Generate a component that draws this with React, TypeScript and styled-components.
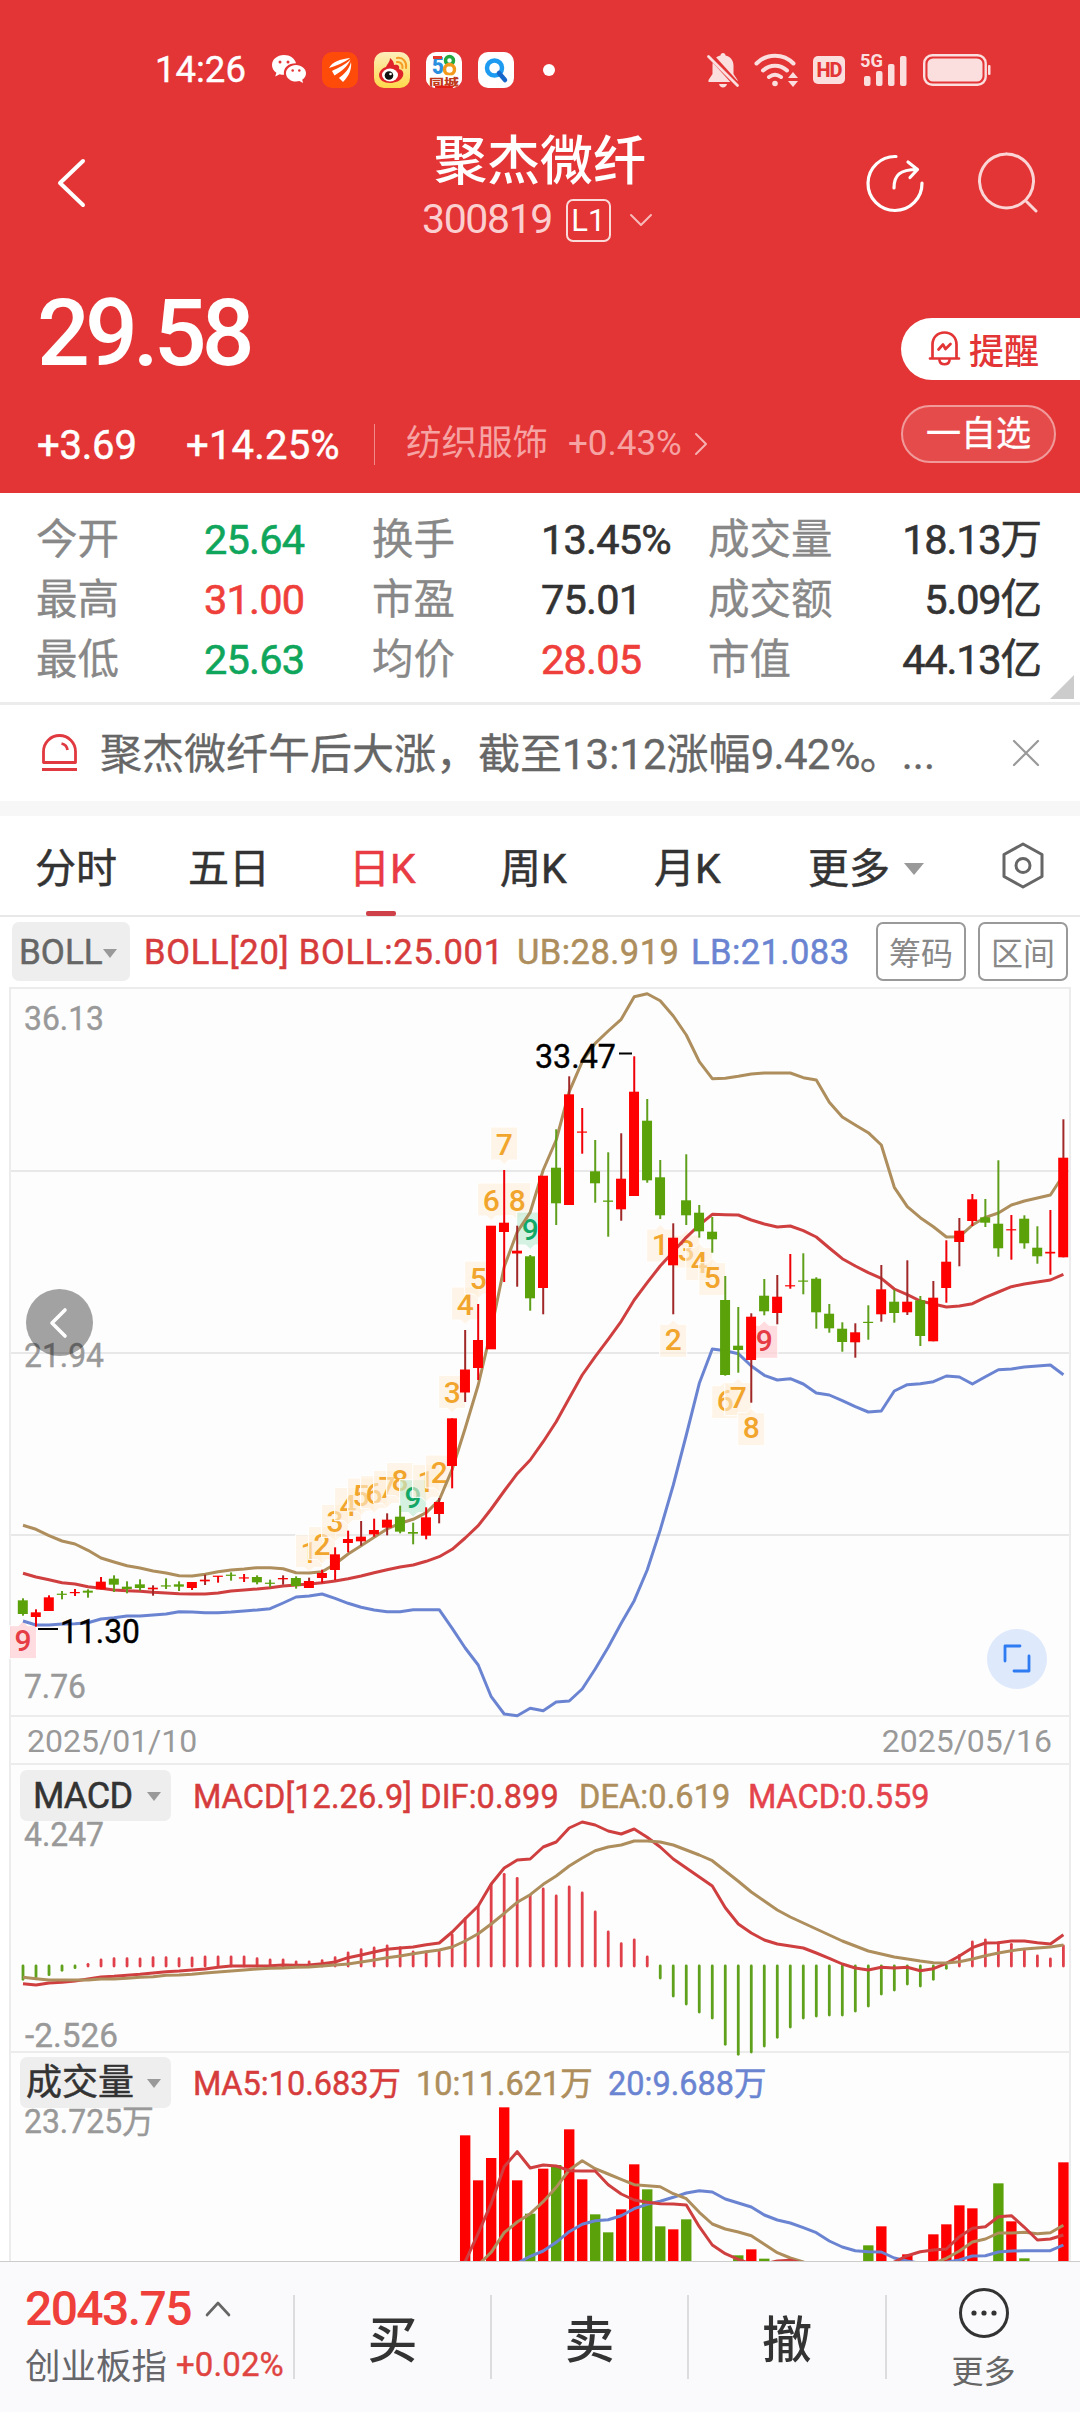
import React from 'react';
import styled, { createGlobalStyle, css } from 'styled-components';

const RED = '#e33536';
const UP = '#ff0000';
const DOWN = '#5aa10a';
const TAN = '#ad8e5c';
const BLUE = '#6a84d2';
const LINE_RED = '#cf3f3f';
const GRID = '#ececec';

const Global = createGlobalStyle`
  *, *::before, *::after { box-sizing: border-box; }
  body {
    margin: 0;
    background: #fdfdfd;
    font-family: Roboto, "Noto Sans CJK SC", sans-serif;
    color: #333;
    font-kerning: none;
  }
  svg { display: block; overflow: visible; flex: none; }
`;

const Screen = styled.div`
  width: 1080px;
  height: 2412px;
  display: flex;
  flex-direction: column;
  overflow: hidden;
  background: #fff;
`;

/* ---------- numbers ---------- */
const Num = styled.span<{ $size: number; $ls?: number; $color?: string; $weight?: number }>`
  font-size: ${p => p.$size}px;
  line-height: 1.2;
  letter-spacing: ${p => p.$ls ?? 0}px;
  color: ${p => p.$color ?? 'inherit'};
  font-weight: ${p => p.$weight ?? 400};
  white-space: pre;
`;

/* ---------- header ---------- */
const Header = styled.header`
  height: 493px;
  flex: none;
  background: ${RED};
  color: #fff;
  display: flex;
  flex-direction: column;
`;

const StatusBar = styled.div`
  height: 124px;
  padding: 16px 89px 0 155px;
  display: flex;
  align-items: center;
  justify-content: space-between;
`;

const StatusGroup = styled.div<{ $gap: number }>`
  display: flex;
  align-items: center;
  gap: ${p => p.$gap}px;
`;

const Clock = styled(Num)`
  width: 101px;
  -webkit-text-stroke: 0.4px currentColor;
`;

const AppBadge = styled.div<{ $bg: string }>`
  width: 36px;
  height: 36px;
  border-radius: 10px;
  background: ${p => p.$bg};
  display: flex;
  align-items: center;
  justify-content: center;
  overflow: hidden;
`;

const Dot = styled.i`
  width: 12px;
  height: 12px;
  border-radius: 50%;
  margin-left: 13px;
  background: #fff;
`;

const TitleBar = styled.div`
  height: 126px;
  padding: 0 42px 0 56px;
  display: grid;
  grid-template-columns: 190px 1fr 190px;
`;

const TitleSide = styled.div<{ $end?: boolean }>`
  display: flex;
  align-items: center;
  height: 118px;
  gap: 53px;
  justify-content: ${p => (p.$end ? 'flex-end' : 'flex-start')};
`;

const TitleCenter = styled.div`
  display: flex;
  flex-direction: column;
  align-items: center;
  padding-right: 14px;
`;

const StockName = styled.h1`
  margin: 0;
  padding-top: 6px;
  height: 72px;
  font-size: 53px;
  line-height: 64px;
  font-weight: 500;
`;

const CodeRow = styled.div`
  height: 48px;
  display: flex;
  align-items: center;
  padding-right: 5px;
  color: #fbcfcf;
`;

const LevelTag = styled.span`
  width: 45px;
  height: 43px;
  margin: 0 18px 0 14px;
  border: 2px solid #fbdada;
  border-radius: 7px;
  display: flex;
  align-items: center;
  justify-content: center;
  font-size: 31px;
  line-height: 1;
  color: #fff;
`;

const Quote = styled.div`
  flex: 1;
  display: flex;
  justify-content: space-between;
`;

const QuoteLeft = styled.div`
  padding: 34px 0 0 37px;
`;

const Price = styled.div`
  height: 100px;
  display: flex;
  align-items: center;
`;

const ChangeRow = styled.div`
  height: 60px;
  margin-top: 30px;
  display: flex;
  align-items: center;
`;

const ChangeValue = styled(Num)<{ $w: number }>`
  width: ${p => p.$w}px;
  padding-top: 3px;
  -webkit-text-stroke: 0.5px currentColor;
`;

const Rule = styled.i`
  width: 1px;
  height: 41px;
  background: #f08a8a;
  margin-right: 31px;
`;

const Sector = styled.span`
  font-size: 35.5px;
  line-height: 50px;
  color: #f6a3a3;
  width: 162px;
  padding-bottom: 2px;
`;

const QuoteRight = styled.div`
  width: 179px;
  padding-top: 68px;
  display: flex;
  flex-direction: column;
  gap: 25px;
`;

const AlertButton = styled.button`
  height: 62px;
  border: 0;
  padding: 0 0 2px 27px;
  border-radius: 31px 0 0 31px;
  background: #fff;
  display: flex;
  align-items: center;
  gap: 8px;
  font: 500 35px Roboto, "Noto Sans CJK SC", sans-serif;
  color: ${RED};
`;

const WatchButton = styled.button`
  width: 155px;
  height: 58px;
  border: 2px solid #f09a9a;
  border-radius: 29px;
  background: #e64b4c;
  padding: 2px 0 0;
  font: 400 35px/50px Roboto, "Noto Sans CJK SC", sans-serif;
  color: #fff;
  white-space: nowrap;
  -webkit-text-stroke: 0.4px currentColor;
`;

/* ---------- key figures ---------- */
const Stats = styled.section`
  position: relative;
  height: 212px;
  flex: none;
  padding: 17px 38px 0 36px;
  border-bottom: 3px solid ${GRID};
  display: grid;
  grid-template-columns: 168px 168px 169px 167px 140px 1fr;
  grid-auto-rows: 60px;
  align-items: center;
`;

const StatLabel = styled.span`
  font-size: 41.5px;
  line-height: 60px;
  color: #888;
  white-space: nowrap;
  -webkit-text-stroke: 0.3px currentColor;
`;

const StatValue = styled.span<{ $color?: string; $end?: boolean }>`
  font-size: 41.5px;
  line-height: 60px;
  letter-spacing: ${p => (p.$end ? -1.2 : -0.8)}px;
  color: ${p => p.$color ?? '#333'};
  text-align: ${p => (p.$end ? 'right' : 'left')};
  white-space: nowrap;
  -webkit-text-stroke: 0.6px currentColor;
`;

const Unit = styled.span`
  letter-spacing: 0;
`;

const Corner = styled.i`
  position: absolute;
  right: 6px;
  bottom: 3px;
  border-left: 24px solid transparent;
  border-bottom: 24px solid #ccc;
`;

/* ---------- notice ---------- */
const Notice = styled.section`
  height: 96px;
  flex: none;
  padding: 0 40px 0 41px;
  display: flex;
  align-items: center;
`;

const NoticeText = styled.p`
  flex: 1;
  margin: 0 0 0 22px;
  padding-top: 3px;
  font-size: 42px;
  line-height: 60px;
  color: #666;
  white-space: nowrap;
  -webkit-text-stroke: 0.3px currentColor;
`;

const Tight = styled.span<{ $ls: number }>`
  letter-spacing: ${p => p.$ls}px;
`;

const Band = styled.div`
  height: 15px;
  flex: none;
  background: #f7f7f7;
`;

/* ---------- period tabs ---------- */
const Tabs = styled.nav`
  height: 101px;
  flex: none;
  padding: 0 35px 0 35px;
  border-bottom: 2px solid #e8e8e8;
  display: flex;
`;

const Tab = styled.div<{ $w: number; $active?: boolean }>`
  width: ${p => p.$w}px;
  height: 100px;
  flex: none;
  display: flex;
  flex-direction: column;
  justify-content: space-between;
  padding-top: 23px;
  font-size: 41px;
  line-height: 60px;
  white-space: nowrap;
  color: ${p => (p.$active ? '#e93b44' : '#333')};
  -webkit-text-stroke: 0.5px currentColor;
`;

const TabLabel = styled.span`
  display: flex;
  align-items: center;
  gap: 14px;
`;

const Underline = styled.i`
  width: 30px;
  height: 5px;
  margin-left: 17px;
  border-radius: 2px;
  background: #cf4148;
`;

const TabSettings = styled.div`
  margin-left: auto;
  padding-top: 26px;
`;

/* ---------- indicator bars ---------- */
const Caret = styled.i<{ $s: number; $color?: string }>`
  border: ${p => p.$s}px solid transparent;
  border-top: ${p => p.$s + 2}px solid ${p => p.$color ?? '#999'};
  border-bottom: 0;
`;

const BollBar = styled.div`
  height: 70px;
  flex: none;
  padding: 5px 12px 6px;
  display: flex;
  align-items: center;
`;

const picker = css`
  background: #eee;
  border-radius: 7px;
  display: flex;
  align-items: center;
  white-space: nowrap;
`;

const BollPicker = styled.div`
  ${picker}
  width: 118px;
  height: 59px;
  padding: 3px 0 0 7px;
  margin-right: 14px;
  color: #666;
  -webkit-text-stroke: 0.5px currentColor;
`;

const Legend = styled(Num)<{ $w: number }>`
  width: ${p => p.$w}px;
  flex: none;
  padding-top: 3px;
  -webkit-text-stroke: 0.5px currentColor;
`;

const OutlineButton = styled.button`
  width: 90px;
  height: 59px;
  flex: none;
  padding: 0 0 2px;
  border: 2px solid #999;
  border-radius: 7px;
  background: #fff;
  font: 400 32px Roboto, "Noto Sans CJK SC", sans-serif;
  color: #888;
`;

const BollActions = styled.div`
  margin-left: auto;
  display: flex;
  gap: 12px;
`;

/* ---------- charts ---------- */
const Frame = styled.section`
  flex: 1;
  min-height: 0;
  margin: 0 9px;
  border: 2px solid ${GRID};
  border-bottom: 0;
  background: #fdfdfd;
  display: flex;
  flex-direction: column;
`;

const PricePane = styled.div`
  position: relative;
  height: 728px;
  flex: none;
  border-bottom: 2px solid ${GRID};
`;

const PanHandle = styled.button`
  position: absolute;
  left: 15px;
  top: 300px;
  width: 67px;
  height: 67px;
  border: 0;
  padding: 0 3px 0 0;
  border-radius: 50%;
  background: rgba(0, 0, 0, 0.36);
  display: flex;
  align-items: center;
  justify-content: center;
`;

const ExpandButton = styled.button`
  position: absolute;
  right: 22px;
  top: 640px;
  width: 60px;
  height: 60px;
  border: 0;
  padding: 0;
  border-radius: 50%;
  background: #dee9fc;
  display: flex;
  align-items: center;
  justify-content: center;
`;

const DateRow = styled.div`
  height: 48px;
  flex: none;
  padding: 2px 17px 0 16px;
  border-bottom: 2px solid ${GRID};
  display: flex;
  align-items: center;
  justify-content: space-between;
  color: #999;
`;

const MacdPane = styled.div`
  height: 288px;
  flex: none;
  border-bottom: 2px solid ${GRID};
`;

const VolumePane = styled.div`
  height: 208px;
  flex: none;
  overflow: hidden;
`;

const PaneBar = styled.div<{ $top: number }>`
  height: ${p => 51 + p.$top}px;
  padding: ${p => p.$top}px 0 0 9px;
  display: flex;
  align-items: center;
`;

const PanePicker = styled.div<{ $pad: number }>`
  ${picker}
  width: 151px;
  height: 51px;
  padding: 2px 10px 0 ${p => p.$pad}px;
  margin-right: 22px;
  justify-content: space-between;
  color: #333;
  -webkit-text-stroke: 0.5px currentColor;
`;

/* ---------- trade bar ---------- */
const TradeBar = styled.footer`
  height: 151px;
  flex: none;
  border-top: 1px solid #ccc;
  background: #fafafc;
  display: grid;
  grid-template-columns: 293px 197px 197px 198px 1fr;
`;

const IndexCell = styled.div`
  padding: 18px 0 0 25px;
  display: flex;
  flex-direction: column;
`;

const IndexTop = styled.div`
  height: 58px;
  display: flex;
  align-items: center;
  gap: 14px;
`;

const IndexBottom = styled.div`
  height: 54px;
  margin-top: -2px;
  display: flex;
  align-items: center;
  gap: 9px;
  font-size: 35.5px;
  color: #66666b;
  white-space: nowrap;
`;

const IndexChange = styled(Num)`
  padding-top: 3px;
  -webkit-text-stroke: 0.4px currentColor;
`;

const TradeCell = styled.div`
  height: 84px;
  margin-top: 33px;
  border-left: 2px solid #dcdcde;
  display: flex;
  flex-direction: column;
  align-items: center;
  justify-content: center;
  padding-top: 8px;
  font-size: 50px;
  line-height: 70px;
  font-weight: 500;
`;

const MoreCell = styled(TradeCell)`
  padding-top: 7px;
  gap: 11px;
  font-size: 32px;
  line-height: 44px;
  font-weight: 400;
  color: #666;
`;

/* ---------- chart data (y values on the canvas grid) ---------- */
type Kind = 'r' | 'd' | 'g';
type Candle = [Kind, number, number, number, number];

const low = (k: Kind, h: number, l: number, t: number, b: number): Candle =>
  [k, 1380 + h / 3, 1380 + l / 3, 1380 + t / 3, 1380 + b / 3];

const candles: Candle[] = [
  low('g', 655, 707, 661, 702), low('r', 688, 740, 697, 711), low('r', 646, 692, 652, 693),
  low('g', 633, 658, 641, 644), low('r', 627, 648, 636, 639), low('g', 628, 653, 632, 638),
  low('r', 591, 628, 605, 628), low('g', 586, 636, 596, 614), low('g', 604, 640, 620, 627),
  low('g', 598, 632, 613, 624), low('d', 616, 647, 623, 628), low('g', 595, 627, 616, 619),
  low('g', 604, 633, 613, 620), low('r', 606, 630, 606, 624), low('d', 584, 615, 599, 604),
  low('r', 588, 608, 587, 590), low('g', 577, 602, 584, 587), low('r', 582, 606, 592, 595),
  low('g', 586, 613, 591, 607), low('g', 599, 622, 608, 611), low('d', 586, 614, 594, 598),
  low('g', 589, 626, 594, 618), low('d', 593, 624, 603, 624), low('r', 569, 608, 579, 594),
  low('r', 502, 600, 523, 570), low('r', 452, 517, 477, 489), low('d', 423, 497, 470, 484),
  low('r', 416, 470, 450, 463), low('d', 400, 466, 419, 443), low('g', 377, 460, 410, 455),
  low('g', 428, 493, 456, 461), low('r', 382, 478, 412, 467), low('d', 354, 430, 366, 402),
  low('r', 115, 325, 115, 258),
  ['d', 1330, 1402, 1369.5, 1392.5], ['r', 1304, 1380, 1340, 1368], ['r', 1226, 1349, 1225.7, 1349.3],
  ['r', 1170, 1282, 1222.7, 1232], ['d', 1225.7, 1286.7, 1250.7, 1253.5], ['g', 1255, 1310.7, 1256.3, 1298.3],
  ['d', 1176, 1314.3, 1175.7, 1288], ['g', 1129.3, 1225, 1167.7, 1203.3], ['d', 1076.3, 1205, 1094.3, 1205],
  ['r', 1108, 1153.7, 1131.5, 1132.7], ['g', 1140, 1202.7, 1171.3, 1183.3], ['g', 1152.3, 1236.7, 1200.5, 1201.8],
  ['d', 1133.3, 1220.7, 1178.7, 1209.3], ['r', 1056.3, 1196, 1091.7, 1196], ['g', 1099, 1182.7, 1120.7, 1180.3],
  ['g', 1160, 1219, 1177.3, 1215.3], ['d', 1223.3, 1314.3, 1237.7, 1265.3], ['g', 1154.3, 1225, 1200.3, 1215.3],
  ['g', 1205, 1237.7, 1212.7, 1231.3], ['g', 1217, 1252.7, 1231.7, 1239.3], ['g', 1276, 1375.7, 1300, 1375],
  ['g', 1307, 1372.7, 1345.7, 1350], ['d', 1313.3, 1402.7, 1316.7, 1360], ['g', 1279, 1315.3, 1295.7, 1311.3],
  ['d', 1275, 1324.3, 1296.7, 1313], ['r', 1254, 1288.7, 1285.2, 1286.4], ['g', 1253.3, 1294.3, 1280.5, 1281.7],
  ['g', 1277.3, 1328.7, 1278.7, 1312.3], ['g', 1304, 1332.7, 1313.7, 1328.3], ['g', 1322.3, 1351.7, 1328.7, 1342],
  ['d', 1323.3, 1357.7, 1332.3, 1342.3], ['g', 1305.3, 1339.7, 1321.8, 1323], ['d', 1265, 1321.7, 1289.3, 1314.3],
  ['g', 1289.7, 1322.7, 1301.7, 1313], ['d', 1260.3, 1315, 1301.7, 1312.3], ['g', 1296, 1346, 1300.3, 1336],
  ['d', 1281, 1341.3, 1297.7, 1341.3], ['r', 1240.3, 1302.7, 1261.7, 1288], ['d', 1218, 1266.3, 1230.7, 1242],
  ['r', 1194, 1226, 1199.3, 1221], ['g', 1199, 1227, 1217.3, 1222.7], ['g', 1160.3, 1256.7, 1223.7, 1248.3],
  ['r', 1215, 1259.7, 1229.2, 1230.4], ['g', 1215.3, 1248.7, 1218.7, 1243.3], ['g', 1226.3, 1263.7, 1247.7, 1256.3],
  ['r', 1210, 1274.7, 1251.8, 1253.5], ['d', 1119.3, 1257.3, 1157.7, 1257.3],
];

const third = (base: number, ys: number[]) => ys.map(y => base + y / 3);

const upper = [
  ...third(1380, [436, 448, 467, 483, 492, 511, 534, 546, 557, 564, 573, 579, 587, 588, 583, 575, 570, 567, 563, 563, 566, 578, 579, 575, 552, 522, 497, 472, 447, 430, 418, 398, 360, 268, 145]),
  1385, 1330, 1266.7, 1232, 1212.3, 1170, 1140, 1091.7, 1061.7, 1043.3, 1031, 1019.3, 996.7, 993.7, 1000.7, 1016, 1035, 1061.7,
  1078.7, 1078.3, 1076.3, 1074, 1073, 1073, 1073, 1077.7, 1080, 1102.3, 1117, 1125, 1132.7, 1145, 1187.3, 1206.7, 1217.7, 1226.7,
  1237, 1236.7, 1225, 1217.3, 1213, 1205, 1201, 1198, 1195, 1175,
];
const middle = [
  ...third(1380, [580, 591, 599, 608, 612, 620, 625, 630, 632, 634, 637, 639, 641, 642, 642, 639, 633, 630, 627, 623, 618, 615, 612, 608, 603, 596, 588, 578, 569, 561, 555, 544, 530, 508, 474, 437, 387, 333, 281, 240]),
  1441.7, 1421.7, 1398.3, 1375, 1356.7, 1339.3, 1321.3, 1300, 1282.7, 1266, 1251.7, 1237.3, 1225, 1214.3, 1214.7, 1215, 1220,
  1224, 1227, 1226, 1230.7, 1237, 1248, 1258.7, 1266, 1272.7, 1278.3, 1289, 1294.7, 1301, 1304, 1307, 1306, 1303.7, 1297.3, 1292,
  1286.7, 1284, 1282, 1280, 1274.3,
];
const lower = [
  ...third(1380, [723, 735, 735, 732, 731, 728, 717, 713, 708, 708, 705, 702, 695, 696, 698, 698, 696, 693, 690, 686, 669, 651, 648, 642, 655, 670, 682, 690, 695, 695, 689, 689, 689, 745, 804, 855, 950, 1002, 1007, 985, 992, 966, 963, 927, 867, 802, 730, 662, 570, 450, 315, 165, 10]),
  1349, 1350.7, 1353.7, 1366, 1375.3, 1380, 1378.7, 1384, 1393, 1395, 1400.7, 1406.7, 1412, 1411, 1391, 1384.7, 1383.7, 1381.7,
  1376, 1377, 1384, 1376.7, 1369.7, 1369, 1367, 1366, 1365, 1374.7,
];

const macdBars = third(1760, [
  655, 648, 641, 628, 620, 610, 597, 593, 593, 594, 590, 590, 593, 591, 588, 588, 588, 588, 593, 597, 597, 603, 603, 599, 590, 576, 566,
  561, 555, 560, 573, 573, 570, 522, 473, 437, 370, 340, 352, 403, 384, 405, 378, 396, 453, 513, 548, 537, 588, 651, 705, 729, 753, 771,
  850, 880, 873, 855, 829, 798, 771, 765, 762, 762, 750, 735, 699, 687, 669, 675, 655, 622, 583, 543, 537, 545, 550, 565, 585, 594, 555,
]);
const dif = third(1760, [
  668, 672, 666, 664, 660, 654, 648, 646, 643, 640, 636, 632, 630, 627, 624, 619, 615, 615, 615, 614, 612, 613, 612, 608, 603, 590, 582,
  573, 565, 561, 558, 551, 546, 513, 473, 435, 369, 321, 297, 294, 258, 243, 201, 183, 192, 210, 219, 204, 229, 258, 294, 321, 348, 375,
  440, 489, 516, 537, 549, 555, 561, 576, 592, 609, 621, 627, 619, 621, 619, 629, 623, 607, 585, 560, 546, 545, 540, 540, 545, 549, 521,
]);
const dea = third(1760, [
  649, 653, 657, 657, 657, 657, 654, 654, 652, 649, 647, 643, 642, 640, 636, 633, 630, 627, 624, 622, 621, 619, 618, 615, 612, 609, 603,
  597, 590, 585, 578, 572, 567, 558, 540, 518, 489, 457, 424, 401, 370, 345, 315, 291, 269, 258, 252, 240, 240, 243, 252, 267, 282, 299,
  330, 361, 393, 420, 447, 468, 486, 504, 522, 540, 555, 570, 579, 588, 594, 600, 605, 606, 602, 594, 584, 576, 569, 564, 561, 558, 552,
]);

const volumes: [number, Kind, number][] = [
  [34, 'r', 256], [35, 'r', 391], [36, 'r', 324], [37, 'r', 172], [38, 'r', 391], [39, 'g', 491], [40, 'r', 356], [41, 'g', 345],
  [42, 'r', 238], [43, 'r', 388], [44, 'g', 493], [45, 'g', 547], [46, 'r', 478], [47, 'r', 343], [48, 'g', 418], [49, 'g', 529],
  [50, 'r', 538], [51, 'g', 508], [55, 'g', 616], [56, 'r', 598], [57, 'g', 626], [65, 'g', 586], [66, 'r', 529], [68, 'r', 613],
  [70, 'r', 553], [71, 'r', 523], [72, 'r', 466], [73, 'r', 475], [75, 'g', 400], [76, 'r', 514], [77, 'g', 625], [80, 'r', 337],
];
const ma5 = third(2050, [
  635, 550, 460, 350, 305, 354, 345, 348, 362, 363, 363, 404, 432, 450, 457, 461, 462, 465, 530, 585, 611, 628, 642, 642, 633, 631, 640,
  650, 650, 650, 650, 650, 650, 636, 617, 605, 600, 597, 560, 535, 530, 500, 497, 532, 570, 567, 555,
]);
const ma10 = third(2050, [
  645, 607, 548, 516, 491, 455, 412, 360, 332, 356, 372, 388, 404, 407, 410, 431, 446, 487, 522, 537, 546, 557, 583, 608, 624, 636,
  650, 650, 650, 650, 650, 650, 650, 650, 650, 640, 625, 603, 576, 567, 549, 549, 547, 551, 548, 526,
]);
const ma20 = third(2050, [
  640, 619, 603, 577, 545, 523, 512, 509, 497, 476, 463, 454, 442, 429, 422, 426, 447, 459, 471, 495, 510, 519, 533, 548, 573, 591, 602,
  605, 606, 624, 633, 640, 641, 637, 630, 618, 617, 606, 603, 602, 602, 602, 585,
]);

const px = (i: number) => 23 + i * 13.005;
const points = (ys: number[], from = 0) => ys.map((y, i) => `${px(i + from).toFixed(1)},${y.toFixed(1)}`).join(' ');

const Line = ({ ys, from, color }: { ys: number[]; from?: number; color: string }) => (
  <polyline points={points(ys, from)} fill="none" stroke={color} strokeWidth="3" strokeLinejoin="round" />
);

const tones = {
  o: { fill: 'rgba(255,238,216,0.6)', text: '#f1a52c' },
  g: { fill: 'rgba(190,235,212,0.65)', text: '#14a866' },
  p: { fill: 'rgba(253,208,212,0.75)', text: '#e63c46' },
};
type Mark = [number, string, 'up' | 'down', keyof typeof tones];
const marks: Mark[] = [
  [22, '1', 'up', 'o'], [23, '2', 'up', 'o'], [24, '3', 'up', 'o'], [25, '4', 'up', 'o'], [26, '5', 'up', 'o'], [27, '6', 'up', 'o'],
  [28, '7', 'up', 'o'], [29, '8', 'up', 'o'], [30, '9', 'up', 'g'], [31, '1', 'up', 'o'], [32, '2', 'up', 'o'], [33, '3', 'up', 'o'],
  [34, '4', 'up', 'o'], [35, '5', 'up', 'o'], [36, '6', 'up', 'o'], [37, '7', 'up', 'o'], [38, '8', 'up', 'o'], [39, '9', 'up', 'g'],
  [49, '1', 'down', 'o'], [50, '2', 'down', 'o'], [51, '3', 'down', 'o'], [52, '4', 'down', 'o'], [53, '5', 'down', 'o'],
  [54, '6', 'down', 'o'], [55, '7', 'down', 'o'], [56, '8', 'down', 'o'], [57, '9', 'down', 'p'], [0, '9', 'down', 'p'],
];

const SequenceMark = ({ mark: [i, digit, dir, tone] }: { mark: Mark }) => {
  const x = px(i);
  const top = dir === 'up' ? candles[i][1] - 43 : candles[i][2] + 10;
  const d = dir === 'up'
    ? `M${x - 13.5} ${top}h27v33h-9l-4.500 4.500l-4.500 -4.500h-9z`
    : `M${x - 13.5} ${top}h9l4.500 -4.500l4.500 4.500h9v33h-27z`;
  return (
    <g>
      <path d={d} fill={tones[tone].fill} stroke="#fff" strokeWidth="1" />
      <text x={x} y={top + (dir === 'up' ? 28 : 25.5)} textAnchor="middle" fontSize="30" fontWeight="500" fill={tones[tone].text}>{digit}</text>
    </g>
  );
};

const AxisLabel = ({ x, y, w, color = '#999', size = 32.5, children }: { x: number; y: number; w: number; color?: string; size?: number; children: string }) => (
  <text x={x} y={y} textLength={w} lengthAdjust="spacingAndGlyphs" fontSize={size} fill={color} stroke={color} strokeWidth="0.4">{children}</text>
);

const PriceChart = () => (
  <svg width="1058" height="726" viewBox="11 989 1058 726">
    {[1171, 1353, 1535].map(y => <path key={y} d={`M11 ${y}H1069`} stroke="#e8e8e8" strokeWidth="2" />)}
    {marks.map((m, k) => <SequenceMark key={k} mark={m} />)}
    <Line ys={upper} color={TAN} />
    <Line ys={middle} color={LINE_RED} />
    <Line ys={lower} color={BLUE} />
    {candles.map(([kind, h, l, t, b], i) => {
      const body = kind === 'g' ? DOWN : UP;
      const wick = kind === 'g' ? '#5f9f1c' : kind === 'd' ? '#a02828' : '#f00008';
      const x = px(i);
      return (
        <g key={i}>
          <rect x={x - 1} y={h} width="2" height={l - h} fill={wick} />
          <rect x={x - 5.2} y={t} width="10" height={Math.max(b - t, 1.2)} fill={body} />
        </g>
      );
    })}
    <AxisLabel x={24} y={1030} w={80}>36.13</AxisLabel>
    <AxisLabel x={24} y={1367} w={80}>21.94</AxisLabel>
    <AxisLabel x={24} y={1698} w={62}>7.76</AxisLabel>
    <AxisLabel x={535} y={1068} w={81} color="#000" size={33}>33.47</AxisLabel>
    <path d="M619 1053.500h13M38 1629h20" stroke="#000" strokeWidth="2" />
    <AxisLabel x={60} y={1643} w={80} color="#000" size={33}>11.30</AxisLabel>
  </svg>
);

const MacdChart = () => (
  <svg width="1058" height="230" viewBox="11 1820 1058 230">
    {macdBars.map((y, i) => {
      const up = y < 1964.5;
      return (
        <path key={i} d={`M${px(i)} 1965V${y}`} stroke={up ? '#e0404a' : '#5fa11c'} strokeWidth="2.8" strokeLinecap="round" />
      );
    })}
    <Line ys={dif} color={LINE_RED} />
    <Line ys={dea} color={TAN} />
    <AxisLabel x={24} y={1845} w={80}>4.247</AxisLabel>
    <AxisLabel x={25} y={2046} w={93}>-2.526</AxisLabel>
  </svg>
);

const VolumeChart = () => (
  <svg width="1058" height="153" viewBox="11 2108 1058 153">
    {volumes.map(([i, kind, y]) => (
      <rect key={i} x={px(i) - 5.2} y={2050 + y / 3} width="10.400" height={220 - y / 3} fill={kind === 'g' ? DOWN : UP} />
    ))}
    <Line ys={ma20} from={38} color={BLUE} />
    <Line ys={ma10} from={35} color={TAN} />
    <Line ys={ma5} from={34} color={LINE_RED} />
    <AxisLabel x={24} y={2133} w={130}>23.725万</AxisLabel>
  </svg>
);

/* ---------- icons ---------- */
const WechatIcon = () => (
  <svg width="34" height="30" viewBox="0 0 34 30">
    <path d="M12 0C5.200 0 0 4.400 0 10c0 3.200 1.700 5.900 4.400 7.800L3.200 21.500l4.500-2.300c1.300.4 2.800.6 4.300.6C11 13 16 8.300 24 8.300 22.800 3.500 18 0 12 0z" fill="#fff" />
    <path d="M34 18.200c0-4.600-4.500-8.300-10-8.300s-10 3.700-10 8.300 4.500 8.300 10 8.300c1.200 0 2.300-.2 3.400-.5l3.700 2-.9-3.300c2.300-1.500 3.800-3.900 3.800-6.500z" fill="#fff" />
    <circle cx="8" cy="7" r="1.500" fill={RED} /><circle cx="16" cy="7" r="1.500" fill={RED} />
    <circle cx="20.700" cy="15.500" r="1.300" fill={RED} /><circle cx="27.300" cy="15.500" r="1.300" fill={RED} />
  </svg>
);
const WingIcon = () => (
  <svg width="24" height="26" viewBox="0 0 24 26" fill="#fff">
    <path d="M22 1C12 2 4 5 1 11c7-2 14-5 20-9z" />
    <path d="M22.500 2.500C17 8 10 11 4 14l2.500 4.500C14 14 20 9 22.500 2.500z" />
    <path d="M23 5c-2 8-7 12-12 16l4 4C21 19 24 12 23 5z" />
  </svg>
);
const WeiboIcon = () => (
  <svg width="34" height="34" viewBox="0 0 34 34">
    <path d="M11 14c1-3 4-5 4-9 3 2 4 5 4 7 4-1 6 1 5 4 4 1 5 4 4 7-2 5-8 7-13 7-6 0-11-3-11-8 0-3 3-7 7-8z" fill="#e0232b" />
    <ellipse cx="15" cy="22" rx="8" ry="6.500" fill="#fff" />
    <circle cx="14" cy="22.500" r="4.300" fill="#111" /><circle cx="15.500" cy="21" r="1.300" fill="#fff" />
    <path d="M22 9c3-.5 6 2 5.500 6M22 5c6-1 10 4 9 10" fill="none" stroke="#f59a23" strokeWidth="2" strokeLinecap="round" />
  </svg>
);
const FiveEightIcon = () => (
  <svg width="36" height="36" viewBox="0 0 36 36" fontWeight="900">
    <text x="6" y="22" fontSize="24" fill="#2b8fe0" textLength="12" lengthAdjust="spacingAndGlyphs">5</text>
    <circle cx="23.500" cy="8.500" r="4" fill="none" stroke="#22a83f" strokeWidth="3.500" />
    <circle cx="23.500" cy="17.500" r="5" fill="none" stroke="#f39a1d" strokeWidth="3.500" />
    <path d="M7 4h9v3H7z" fill="#e33a2c" />
    <path d="M0 25q18-4 36 0v11H0z" fill="#fff" />
    <text x="3" y="33.500" fontSize="10" fill="#c0391b" textLength="30" lengthAdjust="spacingAndGlyphs">同城</text>
    <path d="M9 35h18" stroke="#e01c12" strokeWidth="3" />
  </svg>
);
const QIcon = () => (
  <svg width="26" height="26" viewBox="0 0 26 26" fill="none" strokeLinecap="round">
    <circle cx="11.500" cy="11" r="7.500" stroke="#1d9bf0" strokeWidth="4.500" />
    <path d="M16 16l6 7" stroke="#1766c9" strokeWidth="4.500" />
  </svg>
);
const soft = '#fbdede';
const MuteIcon = () => (
  <svg width="32" height="36" viewBox="0 0 32 36">
    <path d="M16 1c1.500 0 2.500 1 2.500 2.500 5 1 8 5 8 10V22l4 6v2h-29v-2l4-6v-8.500c0-5 3-9 8-10C13.500 2 14.500 1 16 1zM12 32h8c-.5 2-2 3.500-4 3.500S12.500 34 12 32z" fill={soft} />
    <path d="M2 2l29 32" stroke={RED} strokeWidth="6" /><path d="M1.500 4.500l29 29" stroke={soft} strokeWidth="2.800" strokeLinecap="round" />
  </svg>
);
const WifiIcon = () => (
  <svg width="44" height="34" viewBox="0 0 44 34" fill="none" stroke={soft} strokeWidth="4" strokeLinecap="round">
    <path d="M2.500 10.500c10-10.500 27-10.500 37 0M9 17.500c7-6.500 17-6.500 24 0M15 24c4-3 8-3 12 0" />
    <circle cx="21" cy="30.500" r="2.800" fill={soft} stroke="none" />
    <path d="M34 25l5-6 5 6zM34 28l5 6 5-6z" fill={soft} stroke="none" />
  </svg>
);
const HdTag = styled.span`
  width: 32px;
  height: 28px;
  border-radius: 5px;
  background: ${soft};
  color: ${RED};
  font-size: 20px;
  line-height: 28px;
  font-weight: 800;
  text-align: center;
  letter-spacing: -1px;
`;
const SignalIcon = () => (
  <svg width="48" height="34" viewBox="0 0 48 34" fill={soft}>
    <text x="0" y="14" fontSize="19" fontWeight="700" textLength="23" lengthAdjust="spacingAndGlyphs">5G</text>
    <rect x="4" y="23" width="6.500" height="10" rx="2" /><rect x="16" y="18" width="6.500" height="15" rx="2" />
    <rect x="28" y="11" width="6.500" height="22" rx="2" /><rect x="40" y="3" width="6.500" height="30" rx="2" />
  </svg>
);
const BatteryIcon = () => (
  <svg width="68" height="32" viewBox="0 0 68 32">
    <rect x="1.200" y="1.200" width="61.500" height="29.500" rx="8" fill="none" stroke={soft} strokeWidth="2.400" />
    <rect x="4.500" y="4.500" width="55" height="23" rx="5.500" fill={soft} /><rect x="65" y="11" width="2.500" height="10" rx="1" fill={soft} />
  </svg>
);
const Stroke = ({ w, h, d, sw, color = '#fff' }: { w: number; h: number; d: string; sw: number; color?: string }) => (
  <svg width={w} height={h} viewBox={`0 0 ${w} ${h}`} fill="none" stroke={color} strokeWidth={sw} strokeLinecap="round" strokeLinejoin="round"><path d={d} /></svg>
);
const AlertIcon = () => (
  <svg width="33" height="36" viewBox="0 0 33 36" fill="none" stroke={RED} strokeWidth="2.700" strokeLinecap="round" strokeLinejoin="round">
    <path d="M2 28.500h29M4.500 28V14.500C4.500 7.500 9.500 2.500 16.500 2.500s12 5 12 12V28M11.500 30.500c1 5 9 5 10 0M10.500 19.500l4.500-5 2.500 4.500 5-5" />
  </svg>
);
const SirenIcon = () => (
  <svg width="37" height="38" viewBox="0 0 37 38" fill="none" stroke="#e0393f" strokeWidth="2.800" strokeLinejoin="round">
    <path d="M2.500 28.500V17.500a16 16 0 0 1 32 0v11zM1 35.500h35M20.500 9.500c3.500.8 5.500 3 6 6.500" />
  </svg>
);
const HexIcon = () => (
  <svg width="44" height="47" viewBox="0 0 44 47" fill="none" stroke="#666" strokeWidth="3" strokeLinejoin="round">
    <path d="M22 2L41 12.500V34.500L22 45L3 34.500V12.500z" /><circle cx="22" cy="23.500" r="7" />
  </svg>
);
const MoreIcon = () => (
  <svg width="50" height="52" viewBox="0 0 50 52">
    <circle cx="25" cy="26" r="23.500" fill="none" stroke="#333" strokeWidth="3" />
    <g fill="#333"><circle cx="15" cy="26" r="2.600" /><circle cx="25" cy="26" r="2.600" /><circle cx="35" cy="26" r="2.600" /></g>
  </svg>
);

const GREEN_TEXT = '#0fa65c';
const RED_TEXT = '#ef3f3b';
type Row = [string, string, string | undefined, string, string, string | undefined, string, string, string];
const rows: Row[] = [
  ['今开', '25.64', GREEN_TEXT, '换手', '13.45%', undefined, '成交量', '18.13', '万'],
  ['最高', '31.00', RED_TEXT, '市盈', '75.01', undefined, '成交额', '5.09', '亿'],
  ['最低', '25.63', GREEN_TEXT, '均价', '28.05', RED_TEXT, '市值', '44.13', '亿'],
];

export default function App() {
  return (
    <Screen>
      <Global />
      <Header>
        <StatusBar>
          <StatusGroup $gap={16}>
            <Clock $size={36.5}>14:26</Clock>
            <WechatIcon />
            <AppBadge $bg="#ff4b0a"><WingIcon /></AppBadge>
            <AppBadge $bg="linear-gradient(#fdeebb, #ffd84a)"><WeiboIcon /></AppBadge>
            <AppBadge $bg="#fff"><FiveEightIcon /></AppBadge>
            <AppBadge $bg="#fff"><QIcon /></AppBadge>
            <Dot />
          </StatusGroup>
          <StatusGroup $gap={15}>
            <MuteIcon />
            <WifiIcon />
            <HdTag>HD</HdTag>
            <SignalIcon />
            <BatteryIcon />
          </StatusGroup>
        </StatusBar>
        <TitleBar>
          <TitleSide><Stroke w={30} h={50} d="M27 3L4 25L27 47" sw={4} /></TitleSide>
          <TitleCenter>
            <StockName>聚杰微纤</StockName>
            <CodeRow>
              <Num $size={41} $ls={-1.4}>300819</Num>
              <LevelTag>L1</LevelTag>
              <Stroke w={24} h={14} d="M2 2L12 12L22 2" sw={2} color="#f8b9b9" />
            </CodeRow>
          </TitleCenter>
          <TitleSide $end>
            <Stroke w={60} h={60} d="M31 3.500A27 27 0 1 0 57 30M29 35C29 22 35 16.500 52 16.500M43 9L52.500 16.500L45 24.500" sw={3.2} />
            <Stroke w={60} h={62} d="M28.500 2a27 27 0 1 0 .01 0M49 50L58 59" sw={3} color="#fbd5d5" />
          </TitleSide>
        </TitleBar>
        <Quote>
          <QuoteLeft>
            <Price><Num $size={93} $ls={-4.9} $weight={500}>29.58</Num></Price>
            <ChangeRow>
              <ChangeValue $size={40} $w={149} $ls={-0.2}>+3.69</ChangeValue>
              <ChangeValue $size={40} $w={188} $ls={0.2}>+14.25%</ChangeValue>
              <Rule />
              <Sector>纺织服饰</Sector>
              <Num $size={35} $ls={0} $color="#f6a3a3">+0.43%</Num>
              <Stroke w={26} h={24} d="M14 2L24 12L14 22" sw={2} color="#f6b0b0" />
            </ChangeRow>
          </QuoteLeft>
          <QuoteRight>
            <AlertButton><AlertIcon />提醒</AlertButton>
            <WatchButton>一自选</WatchButton>
          </QuoteRight>
        </Quote>
      </Header>

      <Stats>
        {rows.map(([a, av, ac, b, bv, bc, c, cv, cu]) => (
          <React.Fragment key={a}>
            <StatLabel>{a}</StatLabel>
            <StatValue $color={ac}>{av}</StatValue>
            <StatLabel>{b}</StatLabel>
            <StatValue $color={bc}>{bv}</StatValue>
            <StatLabel>{c}</StatLabel>
            <StatValue $end>{cv}<Unit>{cu}</Unit></StatValue>
          </React.Fragment>
        ))}
        <Corner />
      </Stats>

      <Notice>
        <SirenIcon />
        <NoticeText>聚杰微纤午后大涨，截至<Tight $ls={0}>13:12</Tight>涨幅<Tight $ls={-0.7}>9.42%</Tight>。...</NoticeText>
        <Stroke w={28} h={28} d="M2 2L26 26M26 2L2 26" sw={2.2} color="#999" />
      </Notice>
      <Band />

      <Tabs>
        <Tab $w={153}>分时</Tab>
        <Tab $w={161}>五日</Tab>
        <Tab $w={151} $active>日K<Underline /></Tab>
        <Tab $w={154}>周K</Tab>
        <Tab $w={154}>月K</Tab>
        <Tab $w={130}><TabLabel>更多<Caret $s={10} /></TabLabel></Tab>
        <TabSettings><HexIcon /></TabSettings>
      </Tabs>

      <BollBar>
        <BollPicker><Num $size={35} $ls={0}>BOLL</Num><Caret $s={7} /></BollPicker>
        <Legend $size={34.5} $ls={0.75} $w={373} $color="#d63c3c">BOLL[20] BOLL:25.001</Legend>
        <Legend $size={34.5} $ls={0.45} $w={174} $color={TAN}>UB:28.919</Legend>
        <Legend $size={34.5} $ls={0.45} $w={165} $color={BLUE}>LB:21.083</Legend>
        <BollActions>
          <OutlineButton>筹码</OutlineButton>
          <OutlineButton>区间</OutlineButton>
        </BollActions>
      </BollBar>

      <Frame>
        <PricePane>
          <PriceChart />
          <PanHandle><Stroke w={20} h={32} d="M17 3L4 16L17 29" sw={3.6} /></PanHandle>
          <ExpandButton>
            <Stroke w={28} h={30} d="M2 17V2H17M26 12V27H11" sw={2.8} color="#2f7bf2" />
          </ExpandButton>
        </PricePane>
        <DateRow>
          <Num $size={32}>2025/01/10</Num>
          <Num $size={32}>2025/05/16</Num>
        </DateRow>
        <MacdPane>
          <PaneBar $top={5}>
            <PanePicker $pad={13}><Num $size={36} $ls={-0.6}>MACD</Num><Caret $s={7.5} /></PanePicker>
            <Legend $size={32.5} $ls={0.1} $w={386} $color="#d63c3c">MACD[12.26.9] DIF:0.899</Legend>
            <Legend $size={32.5} $ls={0.1} $w={169} $color={TAN}>DEA:0.619</Legend>
            <Legend $size={32.5} $w={180} $color="#e4434c">MACD:0.559</Legend>
          </PaneBar>
          <MacdChart />
        </MacdPane>
        <VolumePane>
          <PaneBar $top={4}>
            <PanePicker $pad={6}><Num $size={36}>成交量</Num><Caret $s={7.5} /></PanePicker>
            <Legend $size={32.5} $w={223} $color="#d63c3c">MA5:10.683万</Legend>
            <Legend $size={32.5} $w={192} $color={TAN}>10:11.621万</Legend>
            <Legend $size={32.5} $w={180} $color={BLUE}>20:9.688万</Legend>
          </PaneBar>
          <VolumeChart />
        </VolumePane>
      </Frame>

      <TradeBar>
        <IndexCell>
          <IndexTop>
            <Num $size={48} $ls={-1.6} $weight={500} $color={RED_TEXT}>2043.75</Num>
            <Stroke w={26} h={16} d="M2 14L13 2L24 14" sw={2.6} color="#666" />
          </IndexTop>
          <IndexBottom>创业板指<IndexChange $size={33} $ls={0.1} $color="#e04440">+0.02%</IndexChange></IndexBottom>
        </IndexCell>
        <TradeCell>买</TradeCell>
        <TradeCell>卖</TradeCell>
        <TradeCell>撤</TradeCell>
        <MoreCell><MoreIcon />更多</MoreCell>
      </TradeBar>
    </Screen>
  );
}
